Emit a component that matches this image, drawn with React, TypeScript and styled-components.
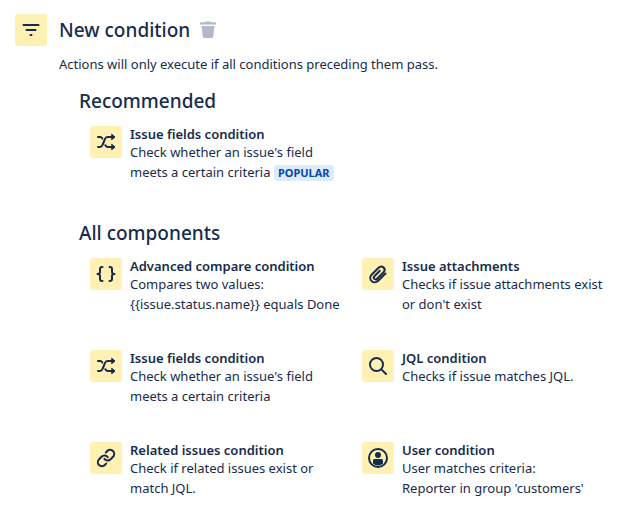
import React from "react";
import styled, { createGlobalStyle } from "styled-components";

const navy = "#172b4d";

const GlobalStyle = createGlobalStyle`
  *, *::before, *::after { box-sizing: border-box; }
  body {
    margin: 0;
    background: #fff;
    color: ${navy};
    font-family: "Noto Sans", "Open Sans", sans-serif;
    font-size: 13px;
    line-height: 20px;
  }
`;

const Page = styled.main`
  display: grid;
  grid-template-columns: 32px minmax(0, 1fr);
  column-gap: 12px;
  padding: 14px 0 20px 15px;
`;

const IconTile = styled.span`
  display: flex;
  flex: none;
  align-items: center;
  justify-content: center;
  width: 32px;
  height: 32px;
  border-radius: 3px;
  background: #fff0b3;
  color: ${navy};
`;

const Header = styled.header`
  display: flex;
  align-items: center;
  gap: 8px;
  height: 32px;
`;

const Title = styled.h1`
  margin: 0;
  font-size: 19px;
  font-weight: 500;
  line-height: 32px;
`;

const DeleteButton = styled.button`
  display: flex;
  padding: 0;
  border: 0;
  background: none;
  color: #b3bac5;
  cursor: pointer;
`;

const Intro = styled.p`
  margin: 8px 0 0;
`;

const Section = styled.section<{ $spaced?: boolean }>`
  margin-top: ${(p) => (p.$spaced ? 29 : 15)}px;
  padding-left: 20px;
`;

const SectionTitle = styled.h2`
  margin: 0;
  font-size: 19px;
  font-weight: 500;
  line-height: 24px;
`;

const CardGrid = styled.div`
  display: grid;
  grid-template-columns: repeat(2, minmax(0, 1fr));
  row-gap: 16px;
  margin-top: 3px;
  padding-left: 1px;
`;

const Card = styled.button`
  display: flex;
  align-items: flex-start;
  gap: 8px;
  padding: 10px;
  border: 0;
  border-radius: 3px;
  background: none;
  color: inherit;
  font: inherit;
  text-align: left;
  cursor: pointer;
`;

const CardText = styled.span`
  display: block;
  min-width: 0;
`;

const CardTitle = styled.span`
  display: block;
  font-weight: 600;
  line-height: 16px;
`;

const CardDescription = styled.span`
  display: block;
  white-space: pre-line;
`;

const Badge = styled.span`
  display: inline-block;
  padding: 0 4px;
  border-radius: 3px;
  background: #deebff;
  color: #0747a6;
  font-size: 11px;
  font-weight: 700;
  line-height: 16px;
`;

type IconName = "filter" | "shuffle" | "braces" | "clip" | "search" | "link" | "user";

const drawings: Record<IconName, React.ReactNode> = {
  filter: (
    <g fill="none" stroke="currentColor" strokeWidth="2" strokeLinecap="round">
      <path d="M4.5 7H19.5M7.5 12H16.5M11.5 17H12.5" />
    </g>
  ),
  shuffle: (
    <g fill="none" stroke="currentColor" strokeWidth="2" strokeLinecap="round" strokeLinejoin="round">
      <path d="M4 17H6C7.5 17 8 16.3 8.5 15L11 9C11.5 7.7 12 7 13.5 7H19" />
      <path d="M4 7H6C7.2 7 7.9 7.5 8.3 8.5M11.3 15.2C11.8 16.5 12.5 17 13.7 17H19" />
      <path fill="currentColor" strokeWidth="1" d="M18 4.5L21 7L18 9.5ZM18 14.5L21 17L18 19.5Z" />
    </g>
  ),
  braces: (
    <g fill="none" stroke="currentColor" strokeWidth="2" strokeLinecap="round" strokeLinejoin="round">
      <path d="M8.5 5H8C6.7 5 6 5.7 6 7V10C6 11.2 5.2 12 3.5 12C5.2 12 6 12.8 6 14V17C6 18.3 6.7 19 8 19H8.5" />
      <path d="M15.5 5H16C17.3 5 18 5.7 18 7V10C18 11.2 18.8 12 20.5 12C18.8 12 18 12.8 18 14V17C18 18.3 17.3 19 16 19H15.5" />
    </g>
  ),
  clip: (
    <path
      fill="none"
      stroke="currentColor"
      strokeWidth="2"
      strokeLinecap="round"
      strokeLinejoin="round"
      d="M19.5 11.5L12.2 18.8C10.2 20.8 7.3 20.8 5.6 19.1C3.8 17.3 3.8 14.5 5.8 12.5L12.6 5.7C14.1 4.2 16.3 4.2 17.6 5.5C18.9 6.8 18.9 8.9 17.5 10.3L11.1 16.7C10.2 17.6 9 17.6 8.3 16.9C7.5 16.1 7.6 15 8.4 14.2L13.8 8.8"
    />
  ),
  search: (
    <g fill="none" stroke="currentColor" strokeWidth="2" strokeLinecap="round">
      <circle cx="10.5" cy="10.5" r="6.5" />
      <path d="M15.4 15.4L20 20" />
    </g>
  ),
  link: (
    <g
      fill="none"
      stroke="currentColor"
      strokeWidth="2.5"
      strokeLinecap="round"
      strokeLinejoin="round"
      transform="translate(2.2 2.2) scale(0.82)"
    >
      <path d="M10 13a5 5 0 0 0 7.54.54l3-3a5 5 0 0 0-7.07-7.07l-1.72 1.71" />
      <path d="M14 11a5 5 0 0 0-7.54-.54l-3 3a5 5 0 0 0 7.07 7.07l1.71-1.71" />
    </g>
  ),
  user: (
    <g fill="currentColor">
      <circle cx="12" cy="12" r="9" fill="none" stroke="currentColor" strokeWidth="2" />
      <circle cx="12" cy="9" r="3" />
      <path d="M7 14.5C7 13.6 7.6 13 8.5 13H15.5C16.4 13 17 13.6 17 14.5V17.5C15.7 18.8 14 19.5 12 19.5S8.3 18.8 7 17.5Z" />
    </g>
  ),
};

function Icon({ name }: { name: IconName }) {
  return (
    <IconTile>
      <svg width="24" height="24" viewBox="0 0 24 24" aria-hidden="true">
        {drawings[name]}
      </svg>
    </IconTile>
  );
}

interface Condition {
  icon: IconName;
  title: string;
  description: string;
  popular?: boolean;
}

const recommended: Condition[] = [
  {
    icon: "shuffle",
    title: "Issue fields condition",
    description: "Check whether an issue's field meets a certain criteria",
    popular: true,
  },
];

const components: Condition[] = [
  {
    icon: "braces",
    title: "Advanced compare condition",
    description: "Compares two values:\n{{issue.status.name}} equals Done",
  },
  {
    icon: "clip",
    title: "Issue attachments",
    description: "Checks if issue attachments exist or don't exist",
  },
  {
    icon: "shuffle",
    title: "Issue fields condition",
    description: "Check whether an issue's field meets a certain criteria",
  },
  { icon: "search", title: "JQL condition", description: "Checks if issue matches JQL." },
  {
    icon: "link",
    title: "Related issues condition",
    description: "Check if related issues exist or match JQL.",
  },
  {
    icon: "user",
    title: "User condition",
    description: "User matches criteria:\nReporter in group 'customers'",
  },
];

function ConditionGrid({ items }: { items: Condition[] }) {
  return (
    <CardGrid>
      {items.map((item) => (
        <Card key={item.title} type="button">
          <Icon name={item.icon} />
          <CardText>
            <CardTitle>{item.title}</CardTitle>
            <CardDescription>
              {item.description}
              {item.popular && (
                <>
                  {" "}
                  <Badge>POPULAR</Badge>
                </>
              )}
            </CardDescription>
          </CardText>
        </Card>
      ))}
    </CardGrid>
  );
}

export default function App() {
  return (
    <>
      <GlobalStyle />
      <Page>
        <Icon name="filter" />
        <div>
          <Header>
            <Title>New condition</Title>
            <DeleteButton type="button" aria-label="Delete condition">
              <svg width="20" height="20" viewBox="0 0 20 20" aria-hidden="true">
                <path
                  fill="currentColor"
                  d="M2 3.5C2 2.7 2.5 2.3 3.2 2.3H7L8 1.5H12L13 2.3H16.8C17.5 2.3 18 2.7 18 3.5V4.5H2ZM3.5 6H16.5L15.2 16.5C15.1 17.4 14.5 18 13.6 18H6.4C5.5 18 4.9 17.4 4.8 16.5Z"
                />
              </svg>
            </DeleteButton>
          </Header>
          <Intro>Actions will only execute if all conditions preceding them pass.</Intro>
          <Section>
            <SectionTitle>Recommended</SectionTitle>
            <ConditionGrid items={recommended} />
          </Section>
          <Section $spaced>
            <SectionTitle>All components</SectionTitle>
            <ConditionGrid items={components} />
          </Section>
        </div>
      </Page>
    </>
  );
}
